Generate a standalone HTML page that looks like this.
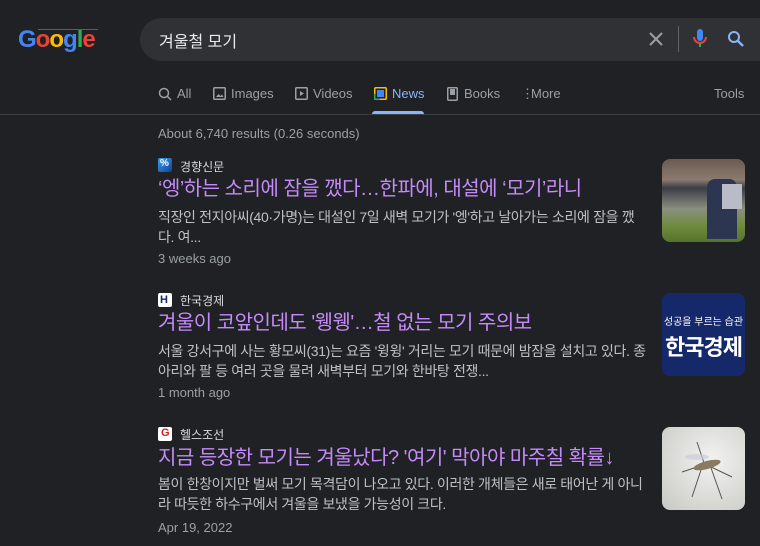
<!DOCTYPE html>
<html><head><meta charset="utf-8"><style>
*{margin:0;padding:0;box-sizing:border-box}
body{width:760px;height:546px;overflow:hidden;background:#202124;font-family:"Liberation Sans","Noto Sans CJK KR",sans-serif;position:relative;color:#bdc1c6}
.a{position:absolute;white-space:nowrap}
.sb{left:140px;top:18px;width:640px;height:43px;border-radius:22px;background:#303134}
.tab{top:86px;font-size:13px;color:#9aa0a6;line-height:16px}
.src{font-size:12px;color:#dadce0}
.tt{font-size:20px;color:#c58af9;line-height:24px;letter-spacing:-0.5px}
.sn{font-size:14px;line-height:20px;color:#bdc1c6;white-space:normal;width:496px;letter-spacing:-0.35px}
.dt{font-size:13px;color:#9aa0a6}
.th{left:662px;width:83px;height:83px;border-radius:8px;overflow:hidden}
.fav{left:158px;width:14px;height:14px;border-radius:2px}
</style></head><body>
<div class="a" style="left:18px;top:26px;font-size:24px;font-weight:bold;letter-spacing:-1px;line-height:28px"><span style="color:#4285f4">G</span><span style="color:#ea4335">o</span><span style="color:#fbbc05">o</span><span style="color:#4285f4">g</span><span style="color:#34a853">l</span><span style="color:#ea4335">e</span></div>
<div class="a" style="left:38px;top:29px;width:60px;height:1px;background:#2e7d32"></div>
<div class="a sb"></div>
<div class="a" style="left:159px;top:28px;font-size:16px;color:#e8eaed">겨울철 모기</div>
<svg class="a" style="left:648px;top:31px" width="16" height="16"><path d="M2 2L14 14M14 2L2 14" stroke="#9aa0a6" stroke-width="2"/></svg>
<div class="a" style="left:678px;top:26px;width:1px;height:26px;background:#5f6368"></div>
<svg class="a" style="left:692px;top:28px" width="16" height="22"><rect x="5" y="1" width="6" height="12" rx="3" fill="#4285f4"/><path d="M2 9a6 6 0 0 0 12 0" stroke="#ea4335" stroke-width="2" fill="none"/><path d="M8 15v4" stroke="#34a853" stroke-width="2"/></svg>
<svg class="a" style="left:727px;top:30px" width="18" height="18"><circle cx="7" cy="7" r="5" stroke="#8ab4f8" stroke-width="2" fill="none"/><path d="M11 11l5 5" stroke="#8ab4f8" stroke-width="2.4"/></svg>
<svg class="a" style="left:158px;top:87px" width="14" height="14"><circle cx="6" cy="6" r="4.5" stroke="#9aa0a6" stroke-width="1.5" fill="none"/><path d="M9.5 9.5L13 13" stroke="#9aa0a6" stroke-width="1.5"/></svg>
<div class="a tab" style="left:177px">All</div>
<svg class="a" style="left:213px;top:87px" width="13" height="13"><rect x=".75" y=".75" width="11.5" height="11.5" rx="1" stroke="#9aa0a6" stroke-width="1.5" fill="none"/><path d="M3 10l2.5-3 2 2 1.5-1.5 1.5 2.5z" fill="#9aa0a6"/></svg>
<div class="a tab" style="left:231px">Images</div>
<svg class="a" style="left:295px;top:87px" width="13" height="13"><rect x=".75" y=".75" width="11.5" height="11.5" rx="1" stroke="#9aa0a6" stroke-width="1.5" fill="none"/><path d="M5 4v5l4-2.5z" fill="#9aa0a6"/></svg>
<div class="a tab" style="left:313px">Videos</div>
<svg class="a" style="left:374px;top:87px" width="13" height="13"><rect x=".75" y=".75" width="11.5" height="11.5" rx="1" stroke="#fbbc05" stroke-width="1.5" fill="none"/><rect x="3" y="3" width="7" height="7" fill="#4285f4"/><path d="M.75 7v5.25h5" stroke="#34a853" stroke-width="1.5" fill="none"/></svg>
<div class="a tab" style="left:392px;color:#8ab4f8">News</div>
<div class="a" style="left:372px;top:111px;width:52px;height:3px;background:#8ab4f8;border-radius:3px 3px 0 0"></div>
<svg class="a" style="left:447px;top:87px" width="11" height="14"><rect x=".75" y=".75" width="9.5" height="12.5" rx="1" stroke="#9aa0a6" stroke-width="1.5" fill="none"/><rect x="3" y="2" width="5" height="6" fill="#9aa0a6"/></svg>
<div class="a tab" style="left:464px">Books</div>
<div class="a tab" style="left:521px">⋮</div>
<div class="a tab" style="left:531px">More</div>
<div class="a tab" style="left:714px">Tools</div>
<div class="a" style="left:0;top:114px;width:760px;height:1px;background:#3c4043"></div>
<div class="a" style="left:158px;top:126px;font-size:13px;color:#9aa0a6">About 6,740 results (0.26 seconds)</div>

<div class="a fav" style="top:158px;background:linear-gradient(135deg,#3aa0e8,#123e9a)"><span style="position:absolute;left:2px;top:0;font-size:10px;color:#fff;font-weight:bold">%</span></div>
<div class="a src" style="left:180px;top:158px">경향신문</div>
<div class="a tt" style="left:158px;top:177px">‘엥’하는 소리에 잠을 깼다…한파에, 대설에 ‘모기’라니</div>
<div class="a sn" style="left:158px;top:207px;width:490px;word-break:break-all">직장인 전지아씨(40·가명)는 대설인 7일 새벽 모기가 '엥'하고 날아가는 소리에 잠을 깼다. 여...</div>
<div class="a dt" style="left:158px;top:251px">3 weeks ago</div>
<div class="a th" style="top:159px;background:linear-gradient(180deg,#6b5a50 0%,#8a7a70 25%,#3a3d45 35%,#8a8f80 60%,#6f8c3c 80%,#56732e 100%)"><div style="position:absolute;left:45px;top:20px;width:30px;height:60px;background:#2c3650;border-radius:8px 8px 0 0"></div><div style="position:absolute;left:60px;top:25px;width:20px;height:25px;background:#b9bcc6"></div></div>

<div class="a fav" style="top:293px;background:#fff"><span style="position:absolute;left:2px;top:0;font-size:11px;color:#1a2a6a;font-weight:bold;line-height:14px">H</span></div>
<div class="a src" style="left:180px;top:292px">한국경제</div>
<div class="a tt" style="left:158px;top:311px">겨울이 코앞인데도 '웽웽'…철 없는 모기 주의보</div>
<div class="a sn" style="left:158px;top:341px">서울 강서구에 사는 황모씨(31)는 요즘 '윙윙' 거리는 모기 때문에 밤잠을 설치고 있다. 종아리와 팔 등 여러 곳을 물려 새벽부터 모기와 한바탕 전쟁...</div>
<div class="a dt" style="left:158px;top:385px">1 month ago</div>
<div class="a th" style="top:293px;background:#15286a;color:#fff;text-align:center"><div style="font-size:10px;margin-top:20px">성공을 부르는 습관</div><div style="font-size:22px;font-weight:bold;margin-top:2px;letter-spacing:-1px">한국경제</div></div>

<div class="a fav" style="top:427px;background:#fff"><span style="position:absolute;left:3px;top:0;font-size:11px;color:#d02020;font-weight:bold;line-height:12px">G</span></div>
<div class="a src" style="left:180px;top:426px">헬스조선</div>
<div class="a tt" style="left:158px;top:446px">지금 등장한 모기는 겨울났다? '여기' 막아야 마주칠 확률↓</div>
<div class="a sn" style="left:158px;top:474px">봄이 한창이지만 벌써 모기 목격담이 나오고 있다. 이러한 개체들은 새로 태어난 게 아니라 따듯한 하수구에서 겨울을 보냈을 가능성이 크다.</div>
<div class="a dt" style="left:158px;top:520px">Apr 19, 2022</div>
<div class="a th" style="top:427px;background:radial-gradient(circle at 60% 40%,#f2f2f0,#c8c8c4)"><svg width="83" height="83"><path d="M20 45L50 35M45 38L70 50M40 40L30 70M48 38L60 72M42 36L35 15" stroke="#555" stroke-width="1"/><ellipse cx="45" cy="38" rx="14" ry="4" fill="#8a7a60" transform="rotate(-15 45 38)"/><ellipse cx="35" cy="30" rx="12" ry="3" fill="#ccd" opacity=".7"/></svg></div>
</body></html>
